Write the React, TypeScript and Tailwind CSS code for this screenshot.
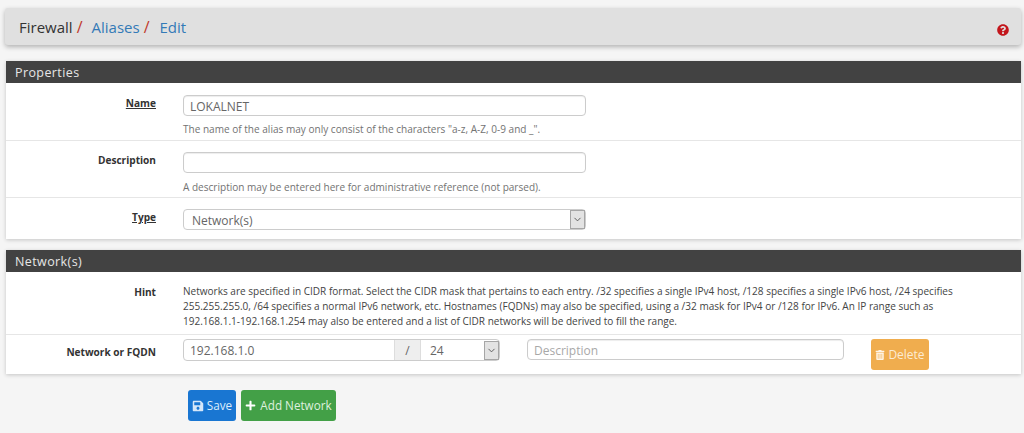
import { FaSave, FaPlus, FaTrashAlt, FaQuestionCircle } from "react-icons/fa";
import { ChevronDown } from "lucide-react";

function PanelHeader({ title }: { title: string }) {
  return (
    <div className="h-[22px] bg-[#424242] pl-[9px] text-[12.5px] leading-[23px] tracking-[0.4px] text-[#e6e6e6]">{title}</div>
  );
}

function Label({ children, underline }: { children: string; underline?: boolean }) {
  return (
    <div className={`mt-[1px] w-[150px] shrink-0 text-right text-[10.1px] font-bold leading-[14px] text-[#333333] ${underline ? "underline" : ""}`}>
      {children}
    </div>
  );
}

function Input({ value, placeholder, className }: { value?: string; placeholder?: string; className: string }) {
  return (
    <div className={`flex h-[21px] items-center rounded-[4px] border border-[#cccccc] bg-white pl-[6px] pt-[2px] text-[12px] shadow-[inset_0_1px_1px_rgba(0,0,0,0.075)] ${className}`}>
      {value ? <span className="text-[#666666]">{value}</span> : <span className="text-[#a8a8a8]">{placeholder}</span>}
    </div>
  );
}

function SelectArrow() {
  return (
    <span className="flex h-[19px] w-[15px] items-center justify-center border border-[#a6a6a6] bg-[#e3e3e3]">
      <ChevronDown size={11} strokeWidth={2} className="text-[#555555]" />
    </span>
  );
}

export default function App() {
  return (
    <div className="min-h-[433px] overflow-hidden bg-[#f5f5f5] pr-[3px] pl-[6px] pt-[8px] font-['Open_Sans',sans-serif]">
      <div className="-ml-[1px] flex h-[37px] items-center justify-between rounded-[3px] bg-[#e0e0e0] pr-[12px] pl-[14px] shadow-[0_2px_5px_rgba(0,0,0,0.28)]">
        <div className="flex items-center pt-[1px] text-[15px] text-[#333333]">
          <span>Firewall</span>
          <span className="ml-[4px] text-[16px] leading-none text-[#c0392b]">/</span>
          <span className="ml-[9px] text-[#337ab7]">Aliases</span>
          <span className="ml-[4px] text-[16px] leading-none text-[#c0392b]">/</span>
          <span className="ml-[10px] text-[#337ab7]">Edit</span>
        </div>
        <FaQuestionCircle size={12} className="mt-[7px] text-[#c3161c]" />
      </div>

      <section className="mt-[16px] bg-white shadow-[0_1px_4px_rgba(0,0,0,0.2)]">
        <PanelHeader title="Properties" />
        <div className="flex h-[58px] gap-[27px] border-b border-[#e6e6e6] pt-[12px]">
          <Label underline>Name</Label>
          <div>
            <Input value="LOKALNET" className="w-[403px]" />
            <p className="mt-[6px] text-[10.05px] leading-[14px] text-[#737373]">
              The name of the alias may only consist of the characters "a-z, A-Z, 0-9 and _".
            </p>
          </div>
        </div>
        <div className="flex h-[57px] gap-[27px] border-b border-[#e6e6e6] pt-[11px]">
          <Label>Description</Label>
          <div>
            <Input className="w-[403px]" />
            <p className="mt-[7px] text-[10.05px] leading-[14px] text-[#737373]">
              A description may be entered here for administrative reference (not parsed).
            </p>
          </div>
        </div>
        <div className="flex h-[41px] gap-[27px] pt-[11px]">
          <Label underline>Type</Label>
          <div className="flex h-[21px] w-[403px] items-center justify-between rounded-[4px] border border-[#cccccc] bg-white pl-[8px] text-[12px] text-[#666666]">
            <span className="pt-[2px]">Network(s)</span>
            <SelectArrow />
          </div>
        </div>
      </section>

      <section className="mt-[11px] bg-white shadow-[0_1px_4px_rgba(0,0,0,0.2)]">
        <PanelHeader title="Network(s)" />
        <div className="flex h-[63px] gap-[27px] border-b border-[#e6e6e6] pt-[12px]">
          <Label>Hint</Label>
          <p className="w-[782px] text-[10.04px] leading-[15px] text-[#444444]">
            Networks are specified in CIDR format. Select the CIDR mask that pertains to each entry. /32 specifies a single IPv4 host, /128 specifies a single IPv6 host, /24 specifies 255.255.255.0, /64 specifies a normal IPv6 network, etc. Hostnames (FQDNs) may also be specified, using a /32 mask for IPv4 or /128 for IPv6. An IP range such as 192.168.1.1-192.168.1.254 may also be entered and a list of CIDR networks will be derived to fill the range.
          </p>
        </div>
        <div className="flex h-[39px] gap-[27px] pt-[4px]">
          <div className="pt-[5px]"><Label>Network or FQDN</Label></div>
          <div className="flex h-[22px] w-[317px] items-stretch rounded-[4px] border border-[#cccccc] bg-white text-[12px] text-[#666666]">
            <span className="flex w-[210px] items-center pl-[6px] pt-[2px]">192.168.1.0</span>
            <span className="flex w-[27px] items-center justify-center border-x border-[#dddddd] bg-[#eeeeee] pt-[2px]">/</span>
            <span className="flex flex-1 items-center justify-between pl-[9px]">
              <span className="pt-[2px]">24</span>
              <SelectArrow />
            </span>
          </div>
          <Input placeholder="Description" className="w-[317px]" />
          <button className="flex h-[31px] w-[58px] items-center justify-center gap-[3px] rounded-[3px] bg-[#f0ad4e] text-[12px] text-[#fcebd3]">
            <FaTrashAlt size={10} className="text-[#fff4e6]" />
            Delete
          </button>
        </div>
      </section>

      <div className="ml-[182px] mt-[16px] flex gap-[5px]">
        <button className="flex h-[31px] w-[48px] items-center justify-center gap-[3px] rounded-[3px] bg-[#1976d2] text-[11.7px] text-[#dcecfb]">
          <FaSave size={12} className="text-[#d5e7f9]" />
          Save
        </button>
        <button className="flex h-[31px] w-[95px] items-center justify-center gap-[4px] rounded-[3px] bg-[#43a047] text-[11.7px] text-[#def0df]">
          <FaPlus size={11} className="text-white" />
          Add Network
        </button>
      </div>
    </div>
  );
}
